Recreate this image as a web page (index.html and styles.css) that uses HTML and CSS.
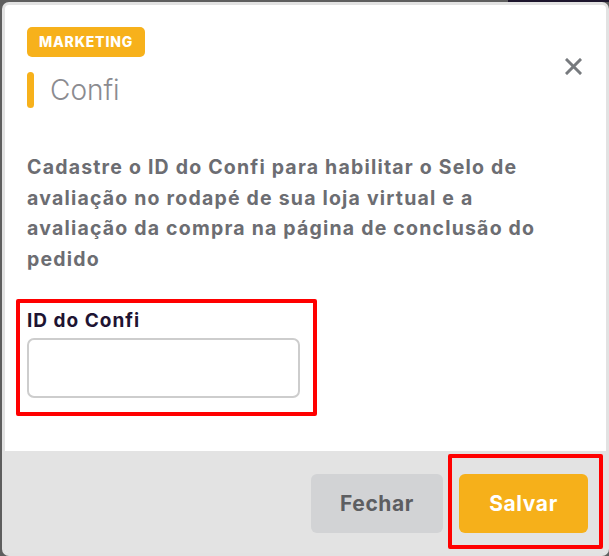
FILE: index.html
```html
<!DOCTYPE html>
<html lang="pt-BR">
<head>
  <meta charset="UTF-8">
  <meta name="viewport" content="width=device-width, initial-scale=1.0">
  <title>Confi</title>
  <link rel="stylesheet" href="styles.css">
</head>
<body>
  <div class="modal">
    <div class="modal-body">
      <div class="modal-head">
        <div class="head-text">
          <span class="tag">Marketing</span>
          <h2 class="modal-title">Confi</h2>
        </div>
        <button class="close" aria-label="Fechar">
          <svg width="17" height="17" viewBox="0 0 17 17">
            <path d="M2 2 L15 15 M15 2 L2 15" stroke="#777a7e" stroke-width="3" stroke-linecap="square" fill="none"/>
          </svg>
        </button>
      </div>

      <p class="intro">Cadastre o ID do Confi para habilitar o Selo de avaliação no rodapé de sua loja virtual e a avaliação da compra na página de conclusão do pedido</p>

      <div class="field marked">
        <label for="confiId">ID do Confi</label>
        <input type="text" id="confiId">
      </div>
    </div>

    <div class="modal-footer">
      <button class="btn btn-gray">Fechar</button>
      <button class="btn btn-yellow marked-save">Salvar</button>
    </div>
  </div>
</body>
</html>
```

FILE: styles.css
```css
body {
  margin: 0;
  height: 100vh;
  background: linear-gradient(to right, #5e5e5e 508px, #1c152c 508px) top / 100% 2px no-repeat, #5e5e5e;
  font-family: 'Inter', 'Noto Sans', sans-serif;
  overflow: hidden;
}

.modal {
  margin: 2px 0 0 2px;
  width: 607px;
  height: 554px;
  box-sizing: border-box;
  border: 3px solid #e2e2e2;
  border-radius: 7px;
  background: #fff;
  display: flex;
  flex-direction: column;
  overflow: hidden;
}

.modal-body {
  flex: 1;
  padding: 22px 24px 0 22px;
}

.modal-head {
  display: flex;
  justify-content: space-between;
  align-items: flex-start;
}

.tag {
  display: inline-block;
  height: 30px;
  line-height: 30px;
  padding: 0 12px;
  background: #f7b11b;
  color: #fff;
  border-radius: 5px;
  font-size: 14px;
  font-weight: 800;
  text-transform: uppercase;
  letter-spacing: 0.8px;
}

.modal-title {
  margin: 15px 0 0;
  display: flex;
  align-items: center;
  gap: 16px;
  height: 36px;
  font-size: 28px;
  font-weight: 300;
  color: #8b8b90;
}

.modal-title::before {
  content: '';
  width: 7px;
  height: 36px;
  border-radius: 4px;
  background: #f7b11b;
}

.close {
  margin-top: 31px;
  padding: 0;
  background: none;
  border: none;
  cursor: pointer;
  line-height: 0;
}

.intro {
  max-width: 536px;
  margin: 44px 0 0;
  font-size: 19.5px;
  font-weight: 700;
  line-height: 30.5px;
  letter-spacing: 1.2px;
  color: #6c6d72;
}

.field {
  position: relative;
  width: 273px;
  margin-top: 35px;
}

.field label {
  display: block;
  margin-bottom: 6px;
  font-size: 19px;
  font-weight: 700;
  letter-spacing: 1px;
  color: #1e1432;
}

.field input {
  display: block;
  width: 273px;
  height: 60px;
  box-sizing: border-box;
  border: 2.5px solid #cdcdcd;
  border-radius: 7px;
  outline: none;
}

.modal-footer {
  height: 102px;
  box-sizing: border-box;
  padding: 23px 18px 0;
  background: #e3e3e3;
  display: flex;
  justify-content: flex-end;
  align-items: flex-start;
  gap: 16px;
}

.btn {
  height: 59px;
  border: none;
  border-radius: 6px;
  font-family: inherit;
  font-size: 21px;
  font-weight: 700;
  letter-spacing: 0.6px;
  cursor: pointer;
}

.btn-gray {
  width: 132px;
  background: #d2d3d5;
  color: #5d5e61;
}

.btn-yellow {
  position: relative;
  width: 129px;
  background: #f6b01a;
  color: #fff;
}

/* red annotation frames */
.marked::after,
.marked-save::after {
  content: '';
  position: absolute;
  border: 4px solid #ff0000;
  border-radius: 2px;
  pointer-events: none;
}

.marked::after {
  top: -10px;
  left: -11px;
  right: -17px;
  bottom: -18px;
}

.marked-save::after {
  top: -20px;
  left: -11px;
  right: -15px;
  bottom: -16px;
}
```
